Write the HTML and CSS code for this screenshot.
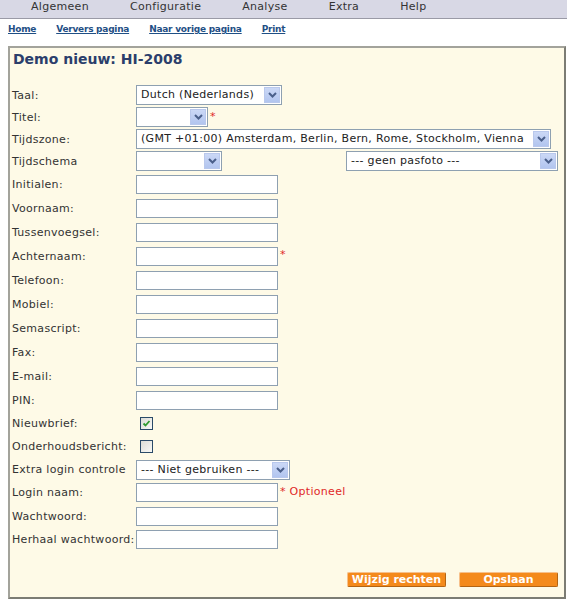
FILE: index.html
```html
<!DOCTYPE html>
<html>
<head>
<meta charset="utf-8">
<link rel="stylesheet" href="styles.css">
</head>
<body>
<div class="menubar">
  <span class="menu-item">Algemeen</span>
  <span class="menu-item">Configuratie</span>
  <span class="menu-item">Analyse</span>
  <span class="menu-item">Extra</span>
  <span class="menu-item">Help</span>
</div>
<div class="linkbar">
  <a href="#">Home</a>
  <a href="#">Ververs pagina</a>
  <a href="#">Naar vorige pagina</a>
  <a href="#">Print</a>
</div>
<div class="panel">
  <h1 class="title">Demo nieuw: HI-2008</h1>
  <div class="form">
    <div class="row r-sel"><label>Taal:</label><div class="select w-taal"><span class="val">Dutch (Nederlands)</span><span class="arrow"><svg width="9" height="6" viewBox="0 0 9 6"><path d="M1 1 L4.5 4.5 L8 1" fill="none" stroke="#4a5f8a" stroke-width="2"/></svg></span></div></div>
    <div class="row r-sel"><label>Titel:</label><div class="select w-titel"><span class="val"></span><span class="arrow"><svg width="9" height="6" viewBox="0 0 9 6"><path d="M1 1 L4.5 4.5 L8 1" fill="none" stroke="#4a5f8a" stroke-width="2"/></svg></span></div><span class="req">*</span></div>
    <div class="row r-sel"><label>Tijdszone:</label><div class="select w-tz"><span class="val">(GMT +01:00) Amsterdam, Berlin, Bern, Rome, Stockholm, Vienna</span><span class="arrow"><svg width="9" height="6" viewBox="0 0 9 6"><path d="M1 1 L4.5 4.5 L8 1" fill="none" stroke="#4a5f8a" stroke-width="2"/></svg></span></div></div>
    <div class="row r-sel"><label>Tijdschema</label><div class="select w-ts"><span class="val"></span><span class="arrow"><svg width="9" height="6" viewBox="0 0 9 6"><path d="M1 1 L4.5 4.5 L8 1" fill="none" stroke="#4a5f8a" stroke-width="2"/></svg></span></div><div class="select w-foto"><span class="val">--- geen pasfoto ---</span><span class="arrow"><svg width="9" height="6" viewBox="0 0 9 6"><path d="M1 1 L4.5 4.5 L8 1" fill="none" stroke="#4a5f8a" stroke-width="2"/></svg></span></div></div>
    <div class="row r-in"><label>Initialen:</label><input class="text" type="text"></div>
    <div class="row r-in"><label>Voornaam:</label><input class="text" type="text"></div>
    <div class="row r-in"><label>Tussenvoegsel:</label><input class="text" type="text"></div>
    <div class="row r-in"><label>Achternaam:</label><input class="text" type="text"><span class="req">*</span></div>
    <div class="row r-in"><label>Telefoon:</label><input class="text" type="text"></div>
    <div class="row r-in"><label>Mobiel:</label><input class="text" type="text"></div>
    <div class="row r-in"><label>Semascript:</label><input class="text" type="text"></div>
    <div class="row r-in"><label>Fax:</label><input class="text" type="text"></div>
    <div class="row r-in"><label>E-mail:</label><input class="text" type="text"></div>
    <div class="row r-in"><label>PIN:</label><input class="text" type="text"></div>
    <div class="row r-chk"><label>Nieuwbrief:</label><span class="check"><svg width="11" height="11" viewBox="0 0 11 11"><path d="M2.5 5.5 L4.5 7.5 L8.5 3" fill="none" stroke="#2f9a2f" stroke-width="1.8"/></svg></span></div>
    <div class="row r-chk"><label>Onderhoudsbericht:</label><span class="check"></span></div>
    <div class="row r-chk"><label>Extra login controle</label><div class="select w-login"><span class="val">--- Niet gebruiken ---</span><span class="arrow"><svg width="9" height="6" viewBox="0 0 9 6"><path d="M1 1 L4.5 4.5 L8 1" fill="none" stroke="#4a5f8a" stroke-width="2"/></svg></span></div></div>
    <div class="row r-in23"><label>Login naam:</label><input class="text" type="text"><span class="req">* Optioneel</span></div>
    <div class="row r-in"><label>Wachtwoord:</label><input class="text" type="password"></div>
    <div class="row r-in23"><label>Herhaal wachtwoord:</label><input class="text" type="password"></div>
  </div>
  <div class="buttons">
    <button class="btn">Wijzig rechten</button>
    <button class="btn">Opslaan</button>
  </div>
</div>
</body>
</html>
```
FILE: styles.css
```css
html, body {
  margin: 0;
  padding: 0;
  background: #ffffff;
  font-family: "DejaVu Sans", Verdana, sans-serif;
  font-size: 11px;
  color: #333333;
}
.menubar {
  height: 19px;
  box-sizing: border-box;
  background: #d8d8e5;
  border-bottom: 1px solid #9a9aa6;
  display: flex;
  align-items: flex-start;
  padding-left: 31px;
  padding-top: 0;
  gap: 41px;
}
.menu-item {
  color: #333;
  font-size: 11px;
  line-height: 13px;
  letter-spacing: 0.3px;
}
.linkbar {
  display: flex;
  gap: 20px;
  padding: 1px 0 0 8px;
  height: 19px;
  box-sizing: border-box;
  align-items: center;
}
.linkbar a {
  color: #1f4f85;
  font-weight: bold;
  font-size: 9px;
  text-decoration: underline;
  letter-spacing: -0.25px;
}
.panel {
  margin: 8px 0 0 8px;
  width: 550px;
  height: 547px;
  background: #fefae7;
  border-top: 2px solid #a3a39b;
  border-left: 2px solid #a3a39b;
  border-right: 2px solid #7c7c74;
  border-bottom: 2px solid #7c7c74;
  padding: 2px 2px 0 2px;
  display: flex;
  flex-direction: column;
}
.title {
  margin: 0;
  font-size: 14px;
  line-height: 18px;
  font-weight: bold;
  color: #2b3e6b;
  padding-left: 1px;
}
.form {
  margin-top: 16px;
  display: flex;
  flex-direction: column;
}
.row {
  display: flex;
  align-items: center;
}
.r-sel { height: 22px; }
.r-in { height: 24px; }
.r-in23 { height: 23px; }
.r-chk { height: 23px; }
.row label {
  width: 124px;
  flex: none;
  color: #333;
  font-size: 11px;
  letter-spacing: 0.3px;
  white-space: nowrap;
}
.text {
  box-sizing: border-box;
  width: 142px;
  height: 19px;
  margin: 0;
  border: 1px solid #8ea0b1;
  background: #fff;
  padding: 0 2px;
}
.select {
  box-sizing: border-box;
  height: 20px;
  border: 1px solid #8ea0b1;
  background: #fff;
  display: flex;
  align-items: center;
  padding: 0 1px 0 4px;
  flex: none;
}
.select .val {
  flex: 1;
  white-space: nowrap;
  overflow: hidden;
  color: #222;
  font-size: 11px;
  letter-spacing: 0.3px;
  line-height: 16px;
}
.select .arrow {
  width: 16px;
  height: 16px;
  flex: none;
  box-sizing: border-box;
  background: linear-gradient(#cbd8f6, #b2c5ef);
  border: 1px solid #b9c8ec;
  display: flex;
  align-items: center;
  justify-content: center;
  margin-left: 2px;
}
.w-taal { width: 146px; }
.w-titel { width: 72px; }
.w-tz { width: 415px; }
.w-ts { width: 86px; }
.w-foto { width: 212px; margin-left: 124px; }
.w-login { width: 154px; }
.req {
  color: #e02828;
  font-size: 11px;
  letter-spacing: 0.3px;
  margin-left: 2px;
  align-self: flex-start;
  padding-top: 4px;
}
.check {
  box-sizing: border-box;
  width: 13px;
  height: 13px;
  margin-left: 4px;
  border: 1px solid #2a4a68;
  background: linear-gradient(135deg, #dcdcd6, #f8f8f6);
  display: flex;
  align-items: center;
  justify-content: center;
}
.buttons {
  display: flex;
  justify-content: flex-end;
  gap: 13px;
  margin-top: 21px;
  padding-right: 4px;
}
.btn {
  width: 99px;
  height: 15px;
  padding: 0;
  margin: 0;
  background: #f48a1c;
  color: #fff;
  font-family: "DejaVu Sans", Verdana, sans-serif;
  font-weight: bold;
  font-size: 11px;
  line-height: 13px;
  border: 1px solid #b36413;
  border-top-color: #f7c08a;
  border-left-color: #f7c08a;
  border-radius: 2px;
}
```
